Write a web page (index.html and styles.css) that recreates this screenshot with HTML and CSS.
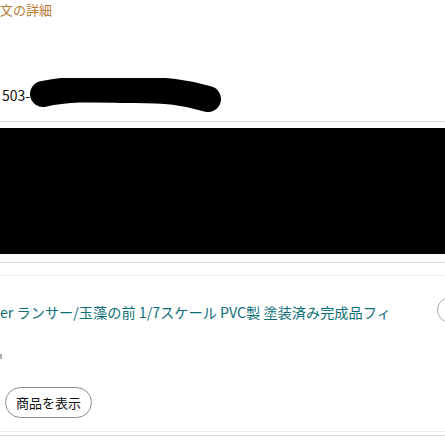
FILE: index.html
```html
<!DOCTYPE html>
<html lang="ja">
<head>
<meta charset="utf-8">
<link rel="stylesheet" href="styles.css">
</head>
<body>
<div class="page">
  <div class="crumb"><span class="crumb-text">文の詳細</span></div>
  <div class="order-row">
    <span class="order-num">503-</span>
    <svg class="scribble" width="200" height="36" viewBox="0 0 200 36">
      <path d="M13 16 C45 9 75 12 105 12 C135 12 155 14 178 21" stroke="#000" stroke-width="26" stroke-linecap="round" fill="none"/>
    </svg>
  </div>
  <div class="rule"></div>
  <div class="redacted"></div>
  <div class="rule rule-gap"></div>
  <div class="rule faint"></div>
  <div class="item-row">
    <span class="item-title">er ランサー/玉藻の前 1/7スケール PVC製 塗装済み完成品フィ</span>
    <span class="circle"></span>
  </div>
  <div class="tick"></div>
  <div class="btn-row"><button class="pill">商品を表示</button></div>
  <div class="rule faint bottom1"></div>
  <div class="rule bottom2"></div>
</div>
</body>
</html>
```
FILE: styles.css
```css
html, body {
  margin: 0;
  padding: 0;
  background: #fff;
  overflow: hidden;
}
.page {
  width: 445px;
  height: 445px;
  overflow: hidden;
  font-family: "Noto Sans CJK JP", "Noto Sans", sans-serif;
  color: #111;
}
.crumb {
  height: 22px;
  white-space: nowrap;
}
.crumb-text {
  display: block;
  font-size: 13px;
  line-height: 20px;
  color: #b87a35;
}
.order-row {
  margin-top: 55px;
  height: 36px;
  display: flex;
  align-items: center;
  white-space: nowrap;
}
.order-num {
  font-size: 14px;
  padding-left: 2px;
  line-height: 20px;
  color: #111;
}
.scribble {
  display: block;
  margin-left: 0;
  margin-top: 2px;
}
.rule {
  height: 1px;
  background: #dcdcdc;
  margin-top: 8px;
}
.redacted {
  margin-top: 6px;
  height: 126px;
  background: #000;
}
.rule-gap {
  margin-top: 8px;
}
.faint {
  background: #ececec;
  margin-top: 12px;
}
.item-row {
  margin-top: 21px;
  height: 30px;
  display: flex;
  align-items: center;
  white-space: nowrap;
  position: relative;
}
.item-title {
  font-size: 14.2px;
  color: #0d6f78;
}
.circle {
  position: absolute;
  left: 437px;
  top: 0;
  width: 24px;
  height: 24px;
  border: 1px solid #aaa;
  border-radius: 50%;
  background: #fff;
}
.tick {
  margin-top: 27px;
  width: 2px;
  height: 5px;
  background: #aaa;
}
.btn-row {
  margin-top: 28px;
  padding-left: 5px;
}
.pill {
  height: 31px;
  padding: 0 10px;
  border: 1px solid #8d8d8d;
  border-radius: 16px;
  background: #fff;
  font-family: "Noto Sans CJK JP", sans-serif;
  font-size: 13px;
  color: #111;
  line-height: 29px;
}
.bottom1 {
  margin-top: 13px;
}
.bottom2 {
  margin-top: 3px;
}
```
